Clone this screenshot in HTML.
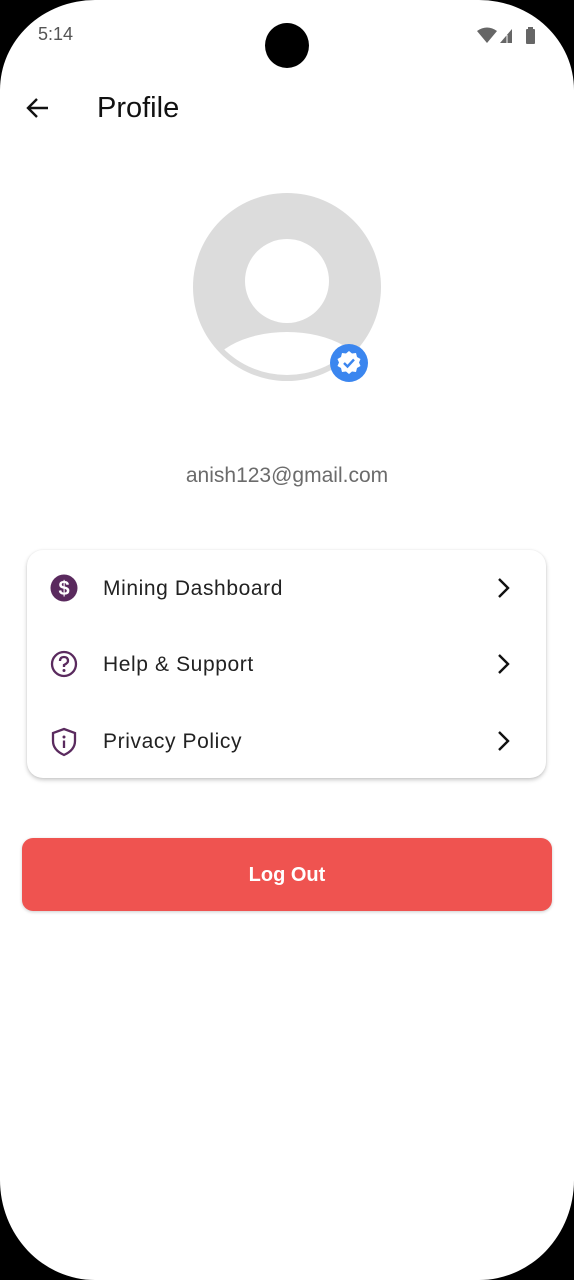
<!DOCTYPE html>
<html><head><meta charset="utf-8"><style>
html,body{margin:0;padding:0;background:#000;}
body{width:574px;height:1280px;position:relative;overflow:hidden;font-family:"Liberation Sans",sans-serif;}
.screen{position:absolute;left:0;top:0;width:574px;height:1280px;background:#fff;border-radius:95px 95px 95px 95px/90px 90px 100px 100px;overflow:hidden;}
.abs{position:absolute;}
.card{position:absolute;left:27px;top:550px;width:519px;height:228px;border-radius:16px;background:#fff;box-shadow:0 2px 4px rgba(0,0,0,0.22),0 0 2px rgba(0,0,0,0.06);}
.row{position:absolute;left:0;width:519px;height:40px;}
.row .t{position:absolute;left:76px;top:9px;font-size:21px;color:#222;letter-spacing:0.6px;}
.row svg.ic{position:absolute;left:23px;top:6px;}
.row svg.ch{position:absolute;left:467px;top:8px;}
</style></head><body>
<div class="screen">
  <div class="abs" style="left:38px;top:24px;font-size:18px;color:#555;">5:14</div>
  <div class="abs" style="left:265px;top:23px;width:44px;height:45px;border-radius:50%;background:#000;"></div>
  <svg class="abs" style="left:476px;top:26px" width="64" height="18" viewBox="0 0 64 18">
    <path d="M1 5 Q11 -2 21 5 L11 17 Z" fill="#666"/>
    <path d="M24 17 L36 3 L36 17 Z" fill="#666"/><path d="M31 9 L31 17" stroke="#fff" stroke-width="1"/>
    <rect x="50" y="3" width="9" height="15" rx="1" fill="#666"/><rect x="52" y="1" width="5" height="3" fill="#666"/>
  </svg>
  <svg class="abs" style="left:25px;top:95px" width="26" height="26" viewBox="0 0 26 26"><path d="M23 13 H4 M12 4 L3 13 L12 22" stroke="#111" stroke-width="2.4" fill="none"/></svg>
  <div class="abs" style="left:97px;top:92px;font-size:29px;color:#111;">Profile</div>

  <svg class="abs" style="left:190px;top:190px" width="200" height="200" viewBox="0 0 200 200">
    <defs><clipPath id="c"><circle cx="97" cy="95" r="90"/></clipPath></defs>
    <circle cx="97" cy="97" r="94" fill="#dcdcdc"/>
    <circle cx="97" cy="91" r="42" fill="#fff"/>
    <g clip-path="url(#c)"><ellipse cx="97" cy="188" rx="80" ry="46" fill="#fff"/></g>
    <circle cx="159" cy="173" r="19" fill="#3b86ef"/>
    <path d="M159 161 l3 2.5 4-.5 1 4 3.5 2-1.5 3.5 1.5 3.5-3.5 2-1 4-4-.5-3 2.5-3-2.5-4 .5-1-4-3.5-2 1.5-3.5-1.5-3.5 3.5-2 1-4 4 .5z" fill="#fff"/>
    <path d="M154 173 l3.5 3.5 6.5-7" stroke="#3b86ef" stroke-width="2.4" fill="none"/>
  </svg>

  <div class="abs" style="left:0;width:574px;top:464px;text-align:center;font-size:21px;color:#6b6b6b;">anish123@gmail.com</div>

  <div class="card">
    <div class="row" style="top:18px">
      <svg class="ic" width="28" height="28" viewBox="0 0 28 28"><circle cx="14" cy="14" r="13.5" fill="#5a2a5e"/><text x="14" y="21" text-anchor="middle" font-size="20" font-weight="bold" fill="#fff" font-family="Liberation Sans">$</text></svg>
      <div class="t">Mining Dashboard</div>
      <svg class="ch" width="20" height="24" viewBox="0 0 20 24"><path d="M5 3 L14 12 L5 21" stroke="#111" stroke-width="2.4" fill="none"/></svg>
    </div>
    <div class="row" style="top:94px">
      <svg class="ic" width="28" height="28" viewBox="0 0 28 28"><circle cx="14" cy="14" r="12" fill="none" stroke="#5a2a5e" stroke-width="2.3"/><path d="M10 11 Q10 7 14 7 Q18 7 18 11 Q18 13 14 15 V17" stroke="#5a2a5e" stroke-width="2.3" fill="none"/><circle cx="14" cy="20.5" r="1.5" fill="#5a2a5e"/></svg>
      <div class="t">Help &amp; Support</div>
      <svg class="ch" width="20" height="24" viewBox="0 0 20 24"><path d="M5 3 L14 12 L5 21" stroke="#111" stroke-width="2.4" fill="none"/></svg>
    </div>
    <div class="row" style="top:171px">
      <svg class="ic" width="28" height="30" viewBox="0 0 28 30"><path d="M14 2 L25 6 V14 Q25 23 14 28 Q3 23 3 14 V6 Z" fill="none" stroke="#5a2a5e" stroke-width="2.3"/><circle cx="14" cy="10" r="1.5" fill="#5a2a5e"/><path d="M14 13.5 V21" stroke="#5a2a5e" stroke-width="2.3"/></svg>
      <div class="t">Privacy Policy</div>
      <svg class="ch" width="20" height="24" viewBox="0 0 20 24"><path d="M5 3 L14 12 L5 21" stroke="#111" stroke-width="2.4" fill="none"/></svg>
    </div>
  </div>

  <div class="abs" style="left:22px;top:838px;width:530px;height:73px;border-radius:11px;background:#ef5350;box-shadow:0 1px 3px rgba(0,0,0,0.2);color:#fff;font-weight:bold;font-size:20px;text-align:center;line-height:75px;">Log Out</div>
</div>
</body></html>
